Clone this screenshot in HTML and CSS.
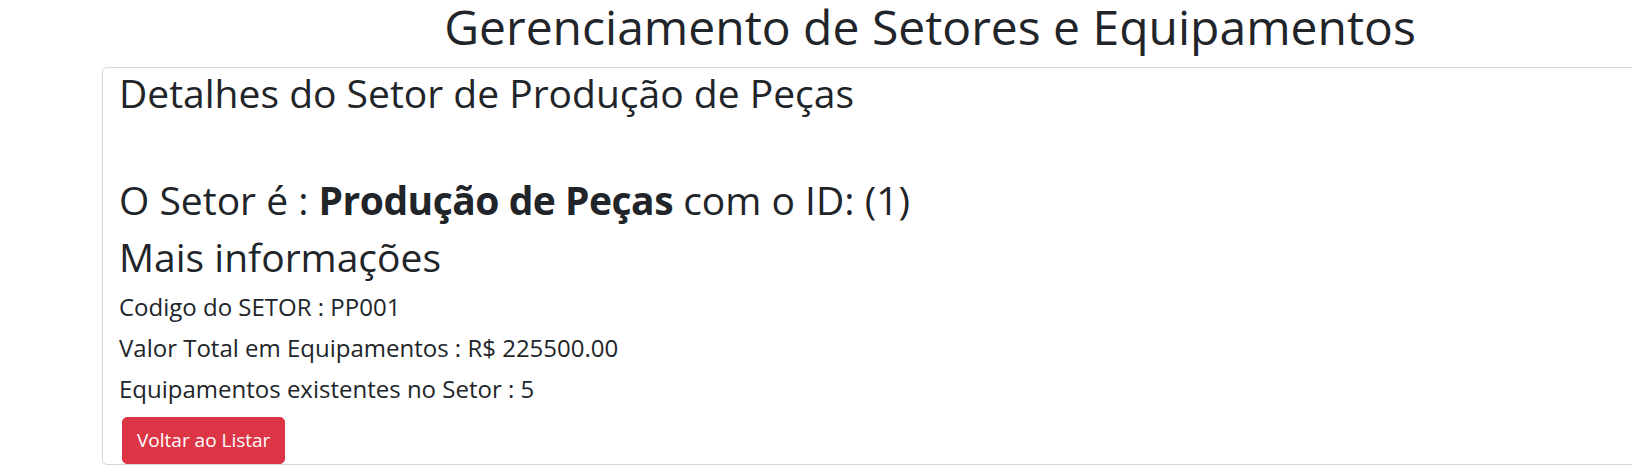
FILE: index.html
```html
<!DOCTYPE html>
<html lang="pt-BR">
<head>
<meta charset="utf-8">
<title>Gerenciamento de Setores e Equipamentos</title>
<link rel="stylesheet" href="styles.css">
</head>
<body>
<div class="page">
  <h1 class="page-title">Gerenciamento de Setores e Equipamentos</h1>
  <div class="card">
    <div class="card-body">
      <h2 class="card-title">Detalhes do Setor de Produção de Peças</h2>
      <h2 class="setor-line">O Setor é : <strong>Produção de Peças</strong> com o ID: (1)</h2>
      <h2 class="info-title">Mais informações</h2>
      <p class="info-line first">Codigo do SETOR : PP001</p>
      <p class="info-line">Valor Total em Equipamentos : R$ 225500.00</p>
      <p class="info-line">Equipamentos existentes no Setor : 5</p>
      <a class="btn btn-danger" href="#">Voltar ao Listar</a>
    </div>
  </div>
</div>
</body>
</html>
```

FILE: styles.css
```css
html, body {
  margin: 0;
  padding: 0;
  background: #fff;
  overflow: hidden;
}

body {
  font-family: "Open Sans", "Noto Sans", sans-serif;
  color: #212529;
  font-size: 19px;
}

.page {
  display: flex;
  flex-direction: column;
}

.page-title {
  margin: 0;
  font-size: 48px;
  line-height: 53px;
  font-weight: 400;
  text-align: center;
  padding-left: 228px;
}

.card {
  margin: 14px -40px 0 102px;
  border: 1px solid rgba(0, 0, 0, 0.16);
  border-radius: 5px;
}

.card-body {
  display: flex;
  flex-direction: column;
  align-items: flex-start;
  padding: 2px 20px 0 16px;
}

.card-title,
.setor-line,
.info-title {
  margin: 0;
  font-size: 39px;
  line-height: 46px;
  font-weight: 400;
}

.setor-line {
  margin-top: 61px;
}

.setor-line strong {
  font-weight: 700;
  letter-spacing: -0.5px;
}

.info-title {
  margin-top: 11px;
}

.info-line {
  margin: 12px 0 0;
  font-size: 24px;
  line-height: 29px;
}

.btn {
  display: inline-block;
  margin: 14px 0 0 3px;
  padding: 8px 14px;
  font-size: 19px;
  line-height: 28.5px;
  border: 1px solid transparent;
  border-radius: 5px;
  text-decoration: none;
}

.btn-danger {
  background: #dc3545;
  border-color: #dc3545;
  color: #fff;
}
```
